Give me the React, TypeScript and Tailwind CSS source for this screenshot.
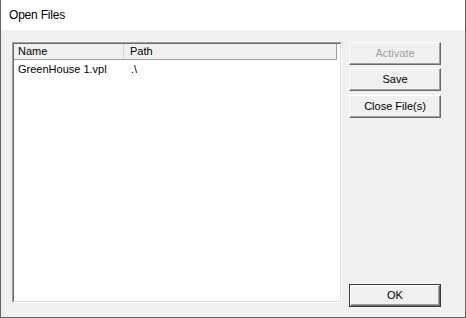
import React from "react";

const font = { fontFamily: '"Liberation Sans", Arial, sans-serif' };

function Btn({
  children,
  disabled,
  def,
  className = "",
}: {
  children: React.ReactNode;
  disabled?: boolean;
  def?: boolean;
  className?: string;
}) {
  if (def) {
    return (
      <div
        className={`h-[23px] w-[92px] border border-[#3c3c3c] ${className}`}
      >
        <div className="flex h-full w-full items-center justify-center border-t border-l border-t-white border-l-white border-b border-r border-b-[#696969] border-r-[#696969] bg-[#f0f0f0] text-[11px] text-black shadow-[inset_-1px_-1px_0_#a0a0a0]">
          {children}
        </div>
      </div>
    );
  }
  return (
    <div
      className={`flex h-[23px] w-[92px] items-center justify-center border-t border-l border-t-white border-l-white border-b border-r border-b-[#696969] border-r-[#696969] bg-[#f0f0f0] text-[11px] shadow-[inset_-1px_-1px_0_#a0a0a0] ${
        disabled ? "text-[#a0a0a0]" : "text-black"
      } ${className}`}
    >
      {children}
    </div>
  );
}

export default function App() {
  return (
    <div
      className="flex h-[318px] w-[466px] flex-col border-l border-r border-b border-[#646464] bg-[#f0f0f0]"
      style={font}
    >
      <div className="flex h-[30px] shrink-0 items-center bg-white pl-[8px] text-[12px] tracking-[-0.2px] text-black">
        Open Files
      </div>
      <div className="flex flex-1 pt-[12px] pl-[11px] pr-[24px]">
        <div className="h-[261px] w-[330px] border border-t-[#a0a0a0] border-l-[#a0a0a0] border-b-white border-r-white">
          <div className="flex h-full w-full flex-col border border-t-[#696969] border-l-[#696969] border-b-[#e3e3e3] border-r-[#e3e3e3] bg-white">
            <div className="flex h-[16px] w-[323px] shrink-0 border-b border-r border-[#a0a0a0] bg-[#f0f0f0] text-[11px] text-black">
              <div className="flex w-[110px] items-center border-r border-[#d5d5d5] pl-[4px]">
                Name
              </div>
              <div className="flex items-center pl-[6px]">Path</div>
            </div>
            <div className="flex h-[18px] items-center text-[11px] text-black">
              <div className="w-[111px] pl-[4px]">GreenHouse 1.vpl</div>
              <div className="pl-[6px]">.\</div>
            </div>
          </div>
        </div>
        <div className="ml-[7px] flex h-[265px] w-[92px] flex-col">
          <Btn disabled>Activate</Btn>
          <Btn className="mt-[3px]">Save</Btn>
          <Btn className="mt-[4px]">Close File(s)</Btn>
          <Btn def className="mt-auto">
            OK
          </Btn>
        </div>
      </div>
    </div>
  );
}
